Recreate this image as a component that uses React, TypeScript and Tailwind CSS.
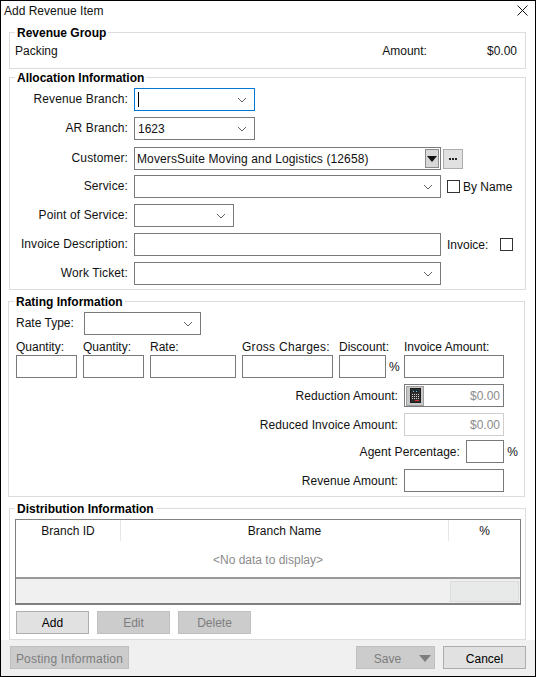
import React from "react";

const Chevron = () => (
  <svg width="10" height="6" viewBox="0 0 10 6" className="shrink-0">
    <path d="M1 1 L5 5 L9 1" fill="none" stroke="#606060" strokeWidth="1" />
  </svg>
);

function Combo({ w, value, focus }: { w: string; value?: string; focus?: boolean }) {
  return (
    <div className={`${w} h-[23px] flex items-center justify-between pl-[3px] pr-[7px] border bg-white ${focus ? "border-[#0078d7]" : "border-[#7a7a7a]"}`}>
      {focus ? <span className="w-px h-[15px] bg-black" /> : <span>{value}</span>}
      <Chevron />
    </div>
  );
}

function Field({ w, value, dim, children }: { w: string; value?: string; dim?: boolean; children?: React.ReactNode }) {
  return (
    <div className={`${w} h-[23px] flex items-center justify-end pr-[3px] border bg-white text-[#8c8c8c] ${dim ? "border-[#cfcfcf]" : "border-[#7a7a7a]"}`}>
      {children}
      {value}
    </div>
  );
}

function Group({ title, className, children }: { title: string; className: string; children: React.ReactNode }) {
  return (
    <section className={`relative border border-[#dcdcdc] bg-white ${className}`}>
      <h2 className="absolute left-[5px] top-[-7px] px-[2px] bg-white font-bold text-[12px] leading-[14px] text-black">{title}</h2>
      {children}
    </section>
  );
}

function Row({ label, children, className = "" }: { label: string; children: React.ReactNode; className?: string }) {
  return (
    <div className={`flex items-center ${className}`}>
      <label className="w-[114px] text-right pr-[5px] mr-[1px] pb-[1px] shrink-0 whitespace-nowrap tracking-[0.12px]">{label}</label>
      {children}
    </div>
  );
}

function RightRow({ label, children, className = "" }: { label: string; children: React.ReactNode; className?: string }) {
  return (
    <div className={`flex items-center justify-end ${className}`}>
      <label className="mr-[6px] tracking-[0.06px]">{label}</label>
      {children}
    </div>
  );
}

function Btn({ children, w, disabled, foot }: { children: React.ReactNode; w: string; disabled?: boolean; foot?: boolean }) {
  return (
    <button className={`${w} h-[23px] border flex items-center justify-center text-[12px] ${foot ? "pt-[2px]" : ""} ${disabled ? "bg-[#cccccc] border-[#bfbfbf] text-[#7d7d7d]" : "bg-[#e1e1e1] border-[#adadad] text-black"}`}>
      {children}
    </button>
  );
}

const Calc = () => (
  <div className="w-[18px] h-[20px] ml-[1px] mr-auto bg-[#c8c8c8] border border-[#a0a0a0] flex items-center justify-center">
    <svg width="11" height="15" viewBox="0 0 11 15">
      <rect x="0.5" y="0.5" width="10" height="14" fill="#2e2e2e" stroke="#1c1c1c" />
      <rect x="2" y="2" width="7" height="3" fill="#1f2a30" />
      <path d="M3 3.5h1M6 3.5h1" stroke="#5fd0e0" strokeWidth="1" />
      <path d="M2 6.5h7M2 8.5h7M2 10.5h7" stroke="#d0d0d0" strokeWidth="1" strokeDasharray="1 1" />
      <rect x="5" y="12" width="4" height="1" fill="#e03030" />
    </svg>
  </div>
);

function ColInput({ label, w, mr, wide }: { label: string; w: string; mr: string; wide?: boolean }) {
  return (
    <div className={`flex flex-col ${w} ${mr}`}>
      <span className={`h-[14px] leading-[14px] mb-[1px] whitespace-nowrap ${wide ? "tracking-[0.28px]" : ""}`}>{label}</span>
      <div className="h-[23px] border border-[#7a7a7a] bg-white" />
    </div>
  );
}

export default function App() {
  return (
    <div className="w-[536px] h-[677px] overflow-hidden flex flex-col border border-black bg-white text-[12px] leading-[14px] text-[#111]" style={{ fontFamily: '"Liberation Sans", Arial, sans-serif' }}>
      <header className="h-[21px] flex items-center justify-between pl-[3px] pr-[7px] pb-[2px] shrink-0">
        <span>Add Revenue Item</span>
        <svg width="11" height="11" viewBox="0 0 11 11"><path d="M0.5 0.5 L10.5 10.5 M10.5 0.5 L0.5 10.5" stroke="#111" strokeWidth="1" /></svg>
      </header>

      <div className="flex-1 flex flex-col pl-[8px] pr-[9px]">
        <Group title="Revenue Group" className="h-[37px] mt-[10px] flex justify-between pl-[5px] pr-[8px] pt-[11px]">
          <span>Packing</span>
          <div className="flex">
            <span className="mr-[60px]">Amount:</span>
            <span>$0.00</span>
          </div>
        </Group>

        <Group title="Allocation Information" className="h-[213px] mt-[8px] pl-[9px] pt-[10px]">
          <div className="flex flex-col gap-[6px]">
            <Row label="Revenue Branch:"><Combo w="w-[121px]" focus /></Row>
            <Row label="AR Branch:"><Combo w="w-[121px]" value="1623" /></Row>
            <Row label="Customer:" className="mt-[1px]">
              <div className="w-[307px] h-[23px] border border-[#7a7a7a] flex items-center pl-[2px] pr-px justify-between">
                <span className="text-[#101010] tracking-[0.12px]">MoversSuite Moving and Logistics (12658)</span>
                <div className="w-[14px] h-[19px] bg-[#d8d8d8] border border-[#8a8a8a] flex items-center justify-center">
                  <svg width="10" height="6" viewBox="0 0 10 6"><path d="M0 0 H10 L5 6 Z" fill="#111" /></svg>
                </div>
              </div>
              <div className="w-[20px] h-[20px] ml-[2px] bg-[#e1e1e1] border border-[#adadad] flex items-center justify-center">
                <svg width="8" height="2" viewBox="0 0 8 2"><path d="M0 0h2v2H0zM3 0h2v2H3zM6 0h2v2H6z" fill="#222" /></svg>
              </div>
            </Row>
            <Row label="Service:" className="-mt-[1px]">
              <Combo w="w-[307px]" />
              <span className="w-[13px] h-[13px] ml-[6px] border border-[#333]" />
              <span className="ml-[3px]">By Name</span>
            </Row>
            <Row label="Point of Service:"><Combo w="w-[100px]" /></Row>
            <Row label="Invoice Description:">
              <div className="w-[307px] h-[23px] border border-[#7a7a7a]" />
              <span className="ml-[6px]">Invoice:</span>
              <span className="w-[13px] h-[13px] ml-[12px] border border-[#333]" />
            </Row>
            <Row label="Work Ticket:"><Combo w="w-[307px]" /></Row>
          </div>
        </Group>

        <Group title="Rating Information" className="h-[196px] mt-[11px] -ml-px mr-px pl-[7px] pt-[10px]">
          <div className="flex items-center">
            <span className="w-[68px] pb-[2px]">Rate Type:</span>
            <Combo w="w-[117px]" />
          </div>
          <div className="flex items-end mt-[5px]">
            <ColInput label="Quantity:" w="w-[61px]" mr="mr-[6px]" />
            <ColInput label="Quantity:" w="w-[61px]" mr="mr-[6px]" />
            <ColInput label="Rate:" w="w-[86px]" mr="mr-[6px]" />
            <ColInput label="Gross Charges:" w="w-[91px]" mr="mr-[6px]" wide />
            <ColInput label="Discount:" w="w-[47px]" mr="mr-[3px]" />
            <span className="w-[15px] h-[23px] flex items-center">%</span>
            <ColInput label="Invoice Amount:" w="w-[100px]" mr="mr-0" />
          </div>
          <div className="flex flex-col gap-[6px] mt-[6px] pr-[20px]">
            <RightRow label="Reduction Amount:"><Field w="w-[100px]" value="$0.00"><Calc /></Field></RightRow>
            <RightRow label="Reduced Invoice Amount:"><Field w="w-[100px]" value="$0.00" dim /></RightRow>
            <RightRow label="Agent Percentage:" className="relative -mt-[2px]">
              <Field w="w-[38px]" />
              <span className="absolute right-[-14px]">%</span>
            </RightRow>
            <RightRow label="Revenue Amount:"><Field w="w-[100px]" /></RightRow>
          </div>
        </Group>

        <Group title="Distribution Information" className="h-[132px] mt-[11px] pl-[5px] pr-[4px] pt-[10px]">
          <div className="h-[86px] border border-b-2 border-[#808080] flex flex-col">
            <div className="h-[21px] flex items-center text-center shrink-0">
              <div className="w-[105px] border-r border-[#e6e6e6] h-full flex items-center justify-center">Branch ID</div>
              <div className="w-[328px] border-r border-[#e6e6e6] h-full flex items-center justify-center">Branch Name</div>
              <div className="flex-1">%</div>
            </div>
            <div className="flex-1 flex items-center justify-center pt-[2px] text-[#8c8c8c]">&lt;No data to display&gt;</div>
            <div className="h-[26px] border-t-2 border-[#999999] bg-[#f0f0f0] flex justify-end items-center pr-px">
              <div className="w-[69px] h-[21px] bg-[#e8eaea] border border-[#dcdcdc]" />
            </div>
          </div>
          <div className="flex gap-[8px] mt-[6px] ml-px">
            <Btn w="w-[73px]">Add</Btn>
            <Btn w="w-[73px]" disabled>Edit</Btn>
            <Btn w="w-[73px]" disabled>Delete</Btn>
          </div>
        </Group>
      </div>

      <footer className="h-[36px] shrink-0 bg-[#f0f0f0] flex items-start pt-[6px] pl-[9px] pr-[9px]">
        <Btn w="w-[119px]" disabled foot><span className="tracking-[0.2px]">Posting Information</span></Btn>
        <div className="ml-auto flex gap-[8px]">
          <Btn w="w-[79px]" disabled foot>
            <span className="ml-[14px] mr-[18px]">Save</span>
            <svg width="12" height="7" viewBox="0 0 12 7"><path d="M0 0 H12 L6 7 Z" fill="#7d7d7d" /></svg>
          </Btn>
          <Btn w="w-[83px]" foot>Cancel</Btn>
        </div>
      </footer>
    </div>
  );
}
